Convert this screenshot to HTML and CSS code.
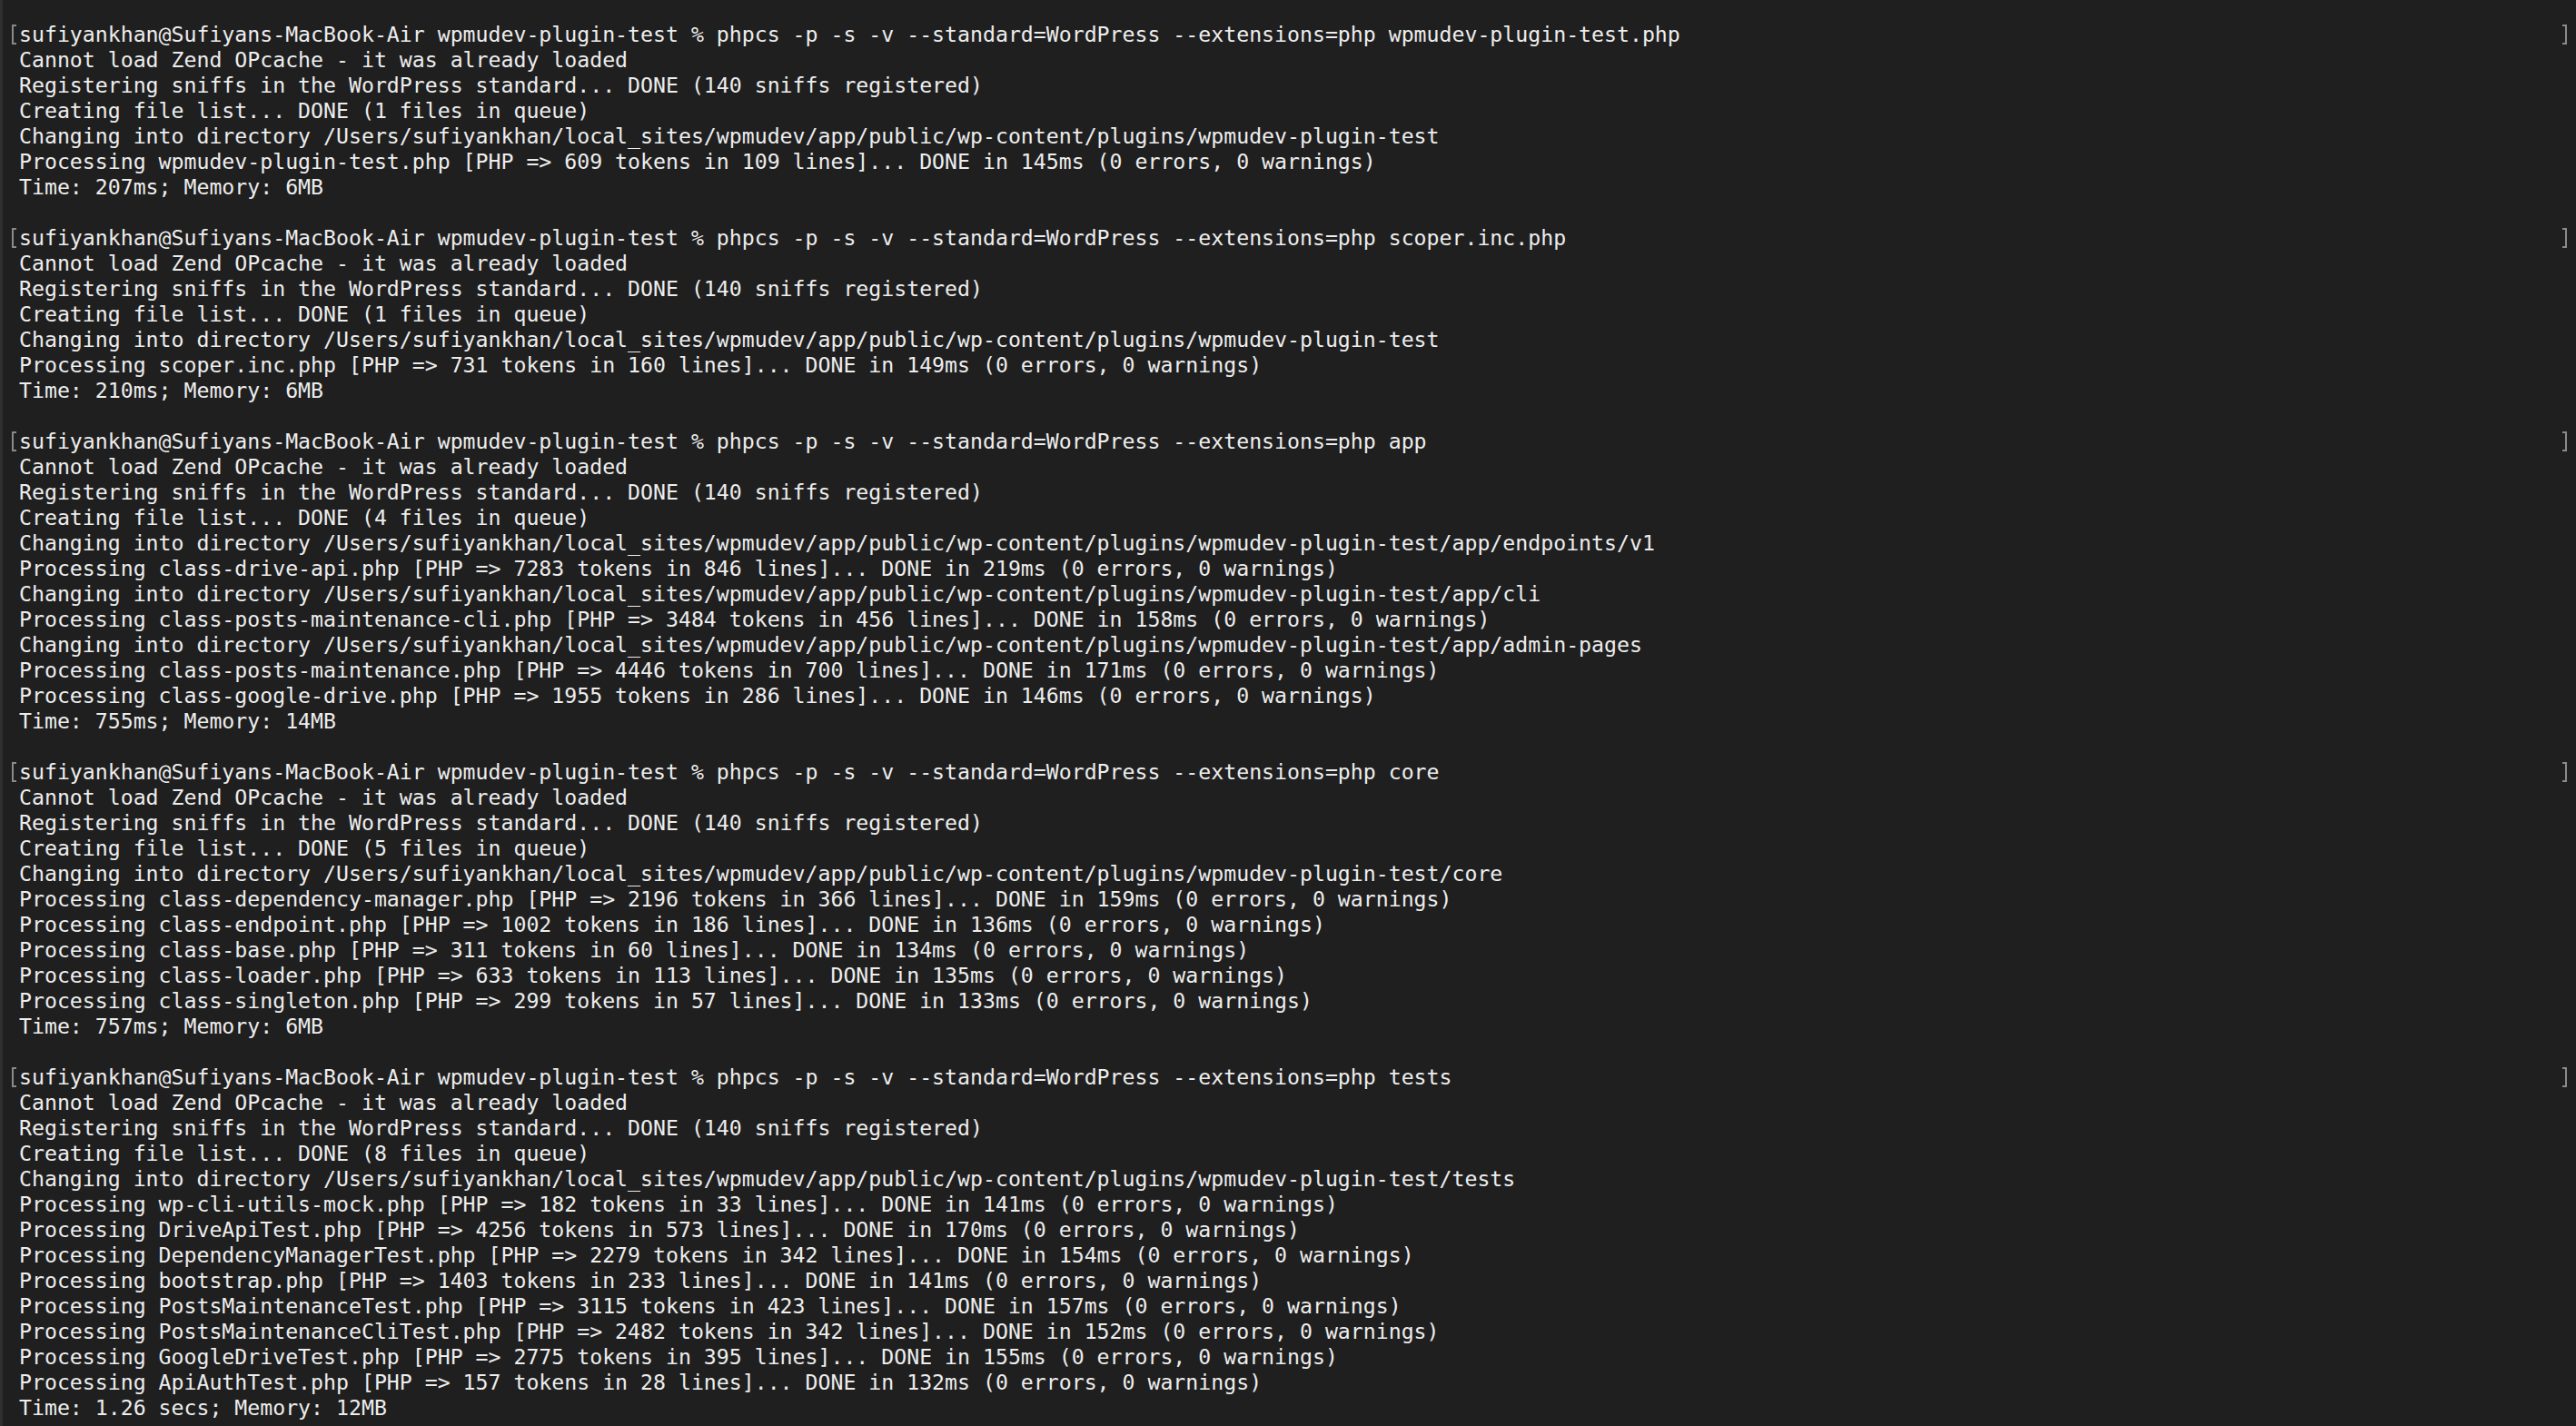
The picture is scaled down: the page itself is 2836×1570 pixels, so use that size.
FILE: index.html
```html
<!DOCTYPE html>
<html>
<head>
<meta charset="utf-8">
<link rel="stylesheet" href="styles.css">
</head>
<body>
<div class="term">
  <div class="line prompt"><span class="gut"><i class="lb"></i></span><span class="txt">sufiyankhan@Sufiyans-MacBook-Air wpmudev-plugin-test % phpcs -p -s -v --standard=WordPress --extensions=php wpmudev-plugin-test.php</span><i class="rb"></i></div>
  <div class="line"><span class="gut"></span><span class="txt">Cannot load Zend OPcache - it was already loaded</span></div>
  <div class="line"><span class="gut"></span><span class="txt">Registering sniffs in the WordPress standard... DONE (140 sniffs registered)</span></div>
  <div class="line"><span class="gut"></span><span class="txt">Creating file list... DONE (1 files in queue)</span></div>
  <div class="line"><span class="gut"></span><span class="txt">Changing into directory /Users/sufiyankhan/local_sites/wpmudev/app/public/wp-content/plugins/wpmudev-plugin-test</span></div>
  <div class="line"><span class="gut"></span><span class="txt">Processing wpmudev-plugin-test.php [PHP =&gt; 609 tokens in 109 lines]... DONE in 145ms (0 errors, 0 warnings)</span></div>
  <div class="line"><span class="gut"></span><span class="txt">Time: 207ms; Memory: 6MB</span></div>
  <div class="line"></div>

  <div class="line prompt"><span class="gut"><i class="lb"></i></span><span class="txt">sufiyankhan@Sufiyans-MacBook-Air wpmudev-plugin-test % phpcs -p -s -v --standard=WordPress --extensions=php scoper.inc.php</span><i class="rb"></i></div>
  <div class="line"><span class="gut"></span><span class="txt">Cannot load Zend OPcache - it was already loaded</span></div>
  <div class="line"><span class="gut"></span><span class="txt">Registering sniffs in the WordPress standard... DONE (140 sniffs registered)</span></div>
  <div class="line"><span class="gut"></span><span class="txt">Creating file list... DONE (1 files in queue)</span></div>
  <div class="line"><span class="gut"></span><span class="txt">Changing into directory /Users/sufiyankhan/local_sites/wpmudev/app/public/wp-content/plugins/wpmudev-plugin-test</span></div>
  <div class="line"><span class="gut"></span><span class="txt">Processing scoper.inc.php [PHP =&gt; 731 tokens in 160 lines]... DONE in 149ms (0 errors, 0 warnings)</span></div>
  <div class="line"><span class="gut"></span><span class="txt">Time: 210ms; Memory: 6MB</span></div>
  <div class="line"></div>

  <div class="line prompt"><span class="gut"><i class="lb"></i></span><span class="txt">sufiyankhan@Sufiyans-MacBook-Air wpmudev-plugin-test % phpcs -p -s -v --standard=WordPress --extensions=php app</span><i class="rb"></i></div>
  <div class="line"><span class="gut"></span><span class="txt">Cannot load Zend OPcache - it was already loaded</span></div>
  <div class="line"><span class="gut"></span><span class="txt">Registering sniffs in the WordPress standard... DONE (140 sniffs registered)</span></div>
  <div class="line"><span class="gut"></span><span class="txt">Creating file list... DONE (4 files in queue)</span></div>
  <div class="line"><span class="gut"></span><span class="txt">Changing into directory /Users/sufiyankhan/local_sites/wpmudev/app/public/wp-content/plugins/wpmudev-plugin-test/app/endpoints/v1</span></div>
  <div class="line"><span class="gut"></span><span class="txt">Processing class-drive-api.php [PHP =&gt; 7283 tokens in 846 lines]... DONE in 219ms (0 errors, 0 warnings)</span></div>
  <div class="line"><span class="gut"></span><span class="txt">Changing into directory /Users/sufiyankhan/local_sites/wpmudev/app/public/wp-content/plugins/wpmudev-plugin-test/app/cli</span></div>
  <div class="line"><span class="gut"></span><span class="txt">Processing class-posts-maintenance-cli.php [PHP =&gt; 3484 tokens in 456 lines]... DONE in 158ms (0 errors, 0 warnings)</span></div>
  <div class="line"><span class="gut"></span><span class="txt">Changing into directory /Users/sufiyankhan/local_sites/wpmudev/app/public/wp-content/plugins/wpmudev-plugin-test/app/admin-pages</span></div>
  <div class="line"><span class="gut"></span><span class="txt">Processing class-posts-maintenance.php [PHP =&gt; 4446 tokens in 700 lines]... DONE in 171ms (0 errors, 0 warnings)</span></div>
  <div class="line"><span class="gut"></span><span class="txt">Processing class-google-drive.php [PHP =&gt; 1955 tokens in 286 lines]... DONE in 146ms (0 errors, 0 warnings)</span></div>
  <div class="line"><span class="gut"></span><span class="txt">Time: 755ms; Memory: 14MB</span></div>
  <div class="line"></div>

  <div class="line prompt"><span class="gut"><i class="lb"></i></span><span class="txt">sufiyankhan@Sufiyans-MacBook-Air wpmudev-plugin-test % phpcs -p -s -v --standard=WordPress --extensions=php core</span><i class="rb"></i></div>
  <div class="line"><span class="gut"></span><span class="txt">Cannot load Zend OPcache - it was already loaded</span></div>
  <div class="line"><span class="gut"></span><span class="txt">Registering sniffs in the WordPress standard... DONE (140 sniffs registered)</span></div>
  <div class="line"><span class="gut"></span><span class="txt">Creating file list... DONE (5 files in queue)</span></div>
  <div class="line"><span class="gut"></span><span class="txt">Changing into directory /Users/sufiyankhan/local_sites/wpmudev/app/public/wp-content/plugins/wpmudev-plugin-test/core</span></div>
  <div class="line"><span class="gut"></span><span class="txt">Processing class-dependency-manager.php [PHP =&gt; 2196 tokens in 366 lines]... DONE in 159ms (0 errors, 0 warnings)</span></div>
  <div class="line"><span class="gut"></span><span class="txt">Processing class-endpoint.php [PHP =&gt; 1002 tokens in 186 lines]... DONE in 136ms (0 errors, 0 warnings)</span></div>
  <div class="line"><span class="gut"></span><span class="txt">Processing class-base.php [PHP =&gt; 311 tokens in 60 lines]... DONE in 134ms (0 errors, 0 warnings)</span></div>
  <div class="line"><span class="gut"></span><span class="txt">Processing class-loader.php [PHP =&gt; 633 tokens in 113 lines]... DONE in 135ms (0 errors, 0 warnings)</span></div>
  <div class="line"><span class="gut"></span><span class="txt">Processing class-singleton.php [PHP =&gt; 299 tokens in 57 lines]... DONE in 133ms (0 errors, 0 warnings)</span></div>
  <div class="line"><span class="gut"></span><span class="txt">Time: 757ms; Memory: 6MB</span></div>
  <div class="line"></div>

  <div class="line prompt"><span class="gut"><i class="lb"></i></span><span class="txt">sufiyankhan@Sufiyans-MacBook-Air wpmudev-plugin-test % phpcs -p -s -v --standard=WordPress --extensions=php tests</span><i class="rb"></i></div>
  <div class="line"><span class="gut"></span><span class="txt">Cannot load Zend OPcache - it was already loaded</span></div>
  <div class="line"><span class="gut"></span><span class="txt">Registering sniffs in the WordPress standard... DONE (140 sniffs registered)</span></div>
  <div class="line"><span class="gut"></span><span class="txt">Creating file list... DONE (8 files in queue)</span></div>
  <div class="line"><span class="gut"></span><span class="txt">Changing into directory /Users/sufiyankhan/local_sites/wpmudev/app/public/wp-content/plugins/wpmudev-plugin-test/tests</span></div>
  <div class="line"><span class="gut"></span><span class="txt">Processing wp-cli-utils-mock.php [PHP =&gt; 182 tokens in 33 lines]... DONE in 141ms (0 errors, 0 warnings)</span></div>
  <div class="line"><span class="gut"></span><span class="txt">Processing DriveApiTest.php [PHP =&gt; 4256 tokens in 573 lines]... DONE in 170ms (0 errors, 0 warnings)</span></div>
  <div class="line"><span class="gut"></span><span class="txt">Processing DependencyManagerTest.php [PHP =&gt; 2279 tokens in 342 lines]... DONE in 154ms (0 errors, 0 warnings)</span></div>
  <div class="line"><span class="gut"></span><span class="txt">Processing bootstrap.php [PHP =&gt; 1403 tokens in 233 lines]... DONE in 141ms (0 errors, 0 warnings)</span></div>
  <div class="line"><span class="gut"></span><span class="txt">Processing PostsMaintenanceTest.php [PHP =&gt; 3115 tokens in 423 lines]... DONE in 157ms (0 errors, 0 warnings)</span></div>
  <div class="line"><span class="gut"></span><span class="txt">Processing PostsMaintenanceCliTest.php [PHP =&gt; 2482 tokens in 342 lines]... DONE in 152ms (0 errors, 0 warnings)</span></div>
  <div class="line"><span class="gut"></span><span class="txt">Processing GoogleDriveTest.php [PHP =&gt; 2775 tokens in 395 lines]... DONE in 155ms (0 errors, 0 warnings)</span></div>
  <div class="line"><span class="gut"></span><span class="txt">Processing ApiAuthTest.php [PHP =&gt; 157 tokens in 28 lines]... DONE in 132ms (0 errors, 0 warnings)</span></div>
  <div class="line"><span class="gut"></span><span class="txt">Time: 1.26 secs; Memory: 12MB</span></div>
</div>
</body>
</html>
```

FILE: styles.css
```css
html, body {
  margin: 0;
  padding: 0;
  background: #1f1f1f;
}
body {
  width: 2836px;
  height: 1570px;
  overflow: hidden;
}
.term {
  box-sizing: border-box;
  height: 1570px;
  padding: 24px 10px 0 0;
  border-left: 3px solid #303030;
  font-family: "DejaVu Sans Mono", "Liberation Mono", monospace;
  font-size: 23.2px;
  color: #ededed;
}
.line {
  display: flex;
  align-items: center;
  height: 28px;
  white-space: pre;
}
.gut {
  flex: 0 0 18px;
  display: flex;
  align-items: center;
  padding-left: 10px;
  box-sizing: border-box;
}
.txt {
  flex: 1 1 auto;
  line-height: 28px;
}
.lb, .rb {
  display: block;
  width: 3px;
  height: 18px;
  border: 2px solid #8a8a8a;
}
.lb {
  border-right: none;
}
.rb {
  border-left: none;
}
```
